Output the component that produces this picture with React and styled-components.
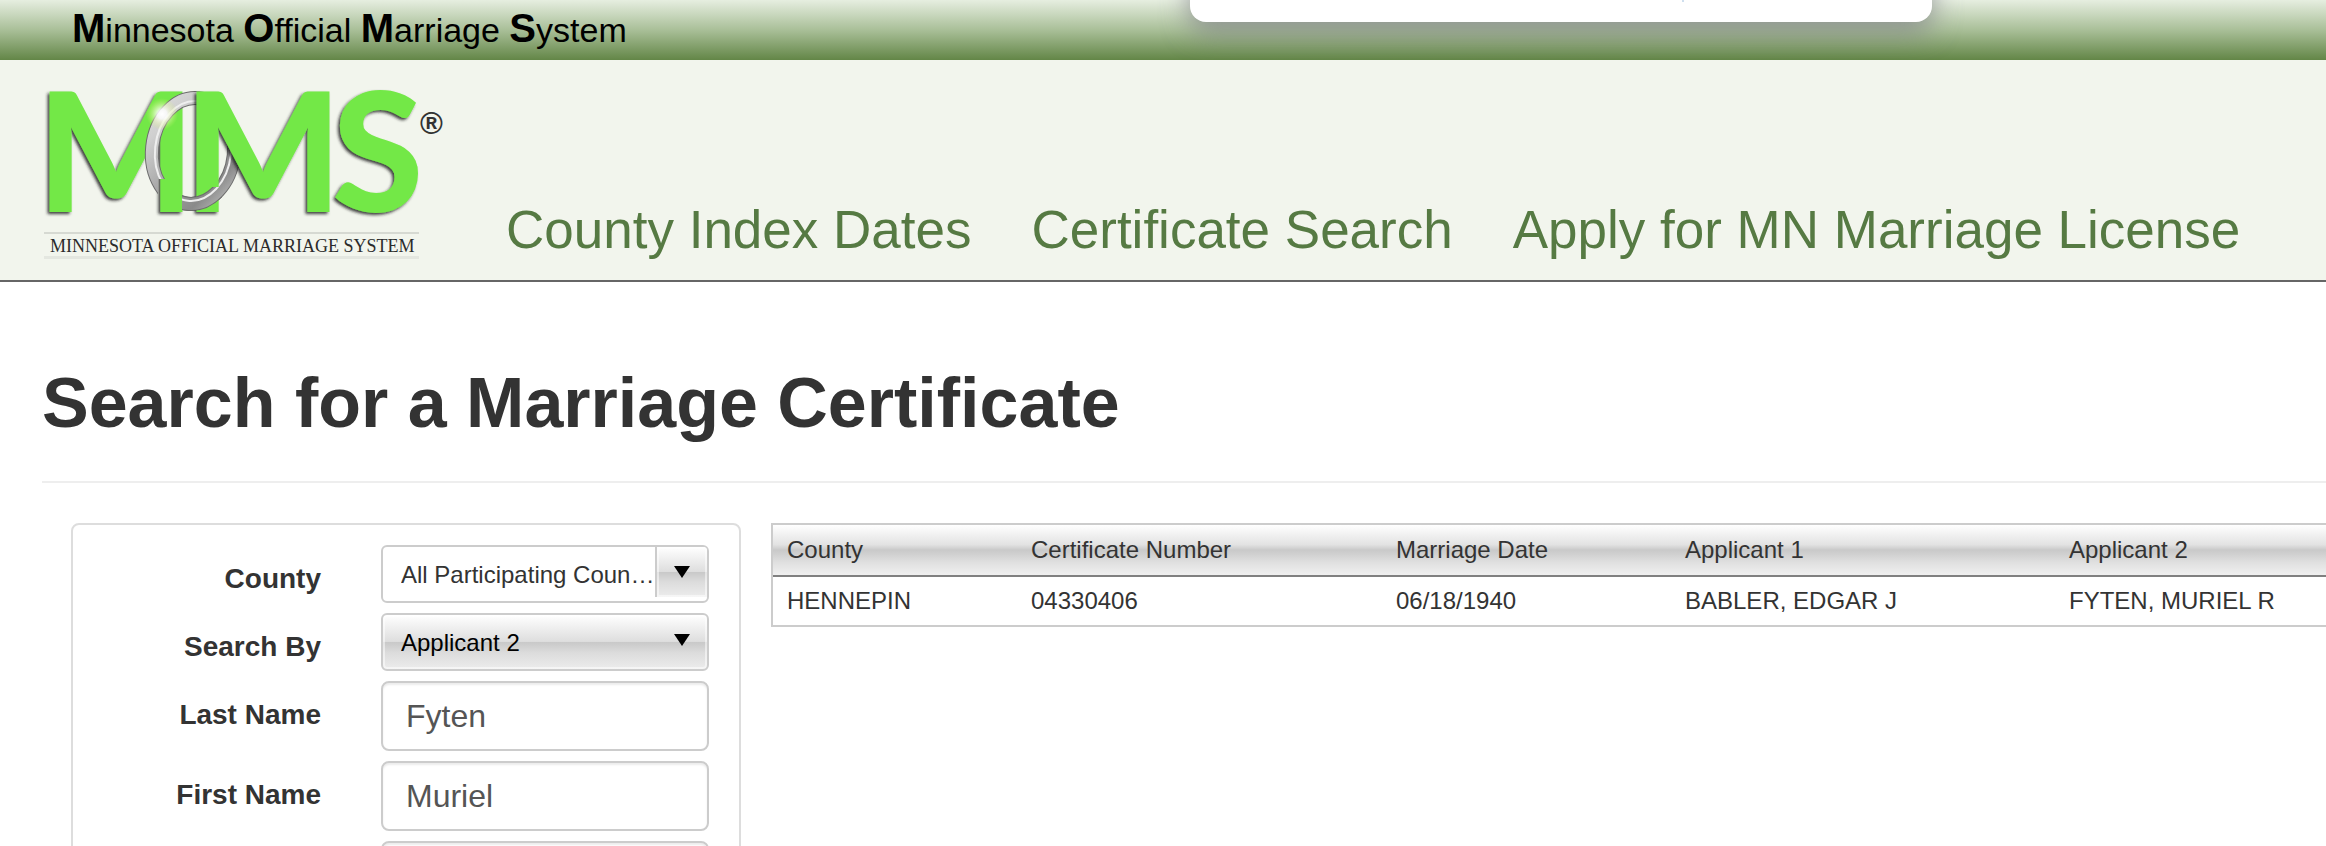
import React, { useState } from 'react';
import styled, { createGlobalStyle, css } from 'styled-components';

const colors = {
  green: '#567a43',
  headerBg: '#f2f5ed',
  text: '#333333',
  input: '#555555',
  border: '#cccccc',
  panel: '#dddddd',
  logo: '#73e847'
};

const glossy = css`
  background: linear-gradient(to bottom, #ffffff 0%, #dedede 49%, #c9c9c9 51%, #dcdcdc 70%, #ececec 100%);
  box-shadow: inset 0 0 0 2px rgba(255, 255, 255, 0.5);
`;

const GlobalStyle = createGlobalStyle`
  * {
    box-sizing: border-box;
  }

  body {
    margin: 0;
    background: #ffffff;
    color: ${colors.text};
    font-family: "Liberation Sans", Arial, sans-serif;
    font-size: 24px;
  }
`;

// Styled Components
const Page = styled.div`
  height: 100vh;
  overflow: hidden;
`;

const TopBar = styled.div`
  position: relative;
  height: 60px;
  padding-left: 72px;
  font-size: 34px;
  line-height: 56px;
  color: #000000;
  background: linear-gradient(to bottom, #e6eee0 0%, #a9bf98 50%, #638647 100%);
  overflow: hidden;
`;

const Initial = styled.b`
  font-size: 40px;
`;

// Bottom edge of the panel that hangs over the top bar
const Popover = styled.div`
  position: absolute;
  top: -40px;
  left: 1190px;
  width: 742px;
  height: 62px;
  border-radius: 16px;
  background: #ffffff;
  box-shadow: 0 10px 28px rgba(120, 120, 130, 0.7);

  &::after {
    content: '';
    position: absolute;
    left: 492px;
    bottom: 20px;
    width: 2px;
    height: 20px;
    background: #cfdfee;
  }
`;

const Header = styled.header`
  display: flex;
  align-items: flex-end;
  gap: 46px;
  height: 222px;
  padding: 0 30px 5px;
  background: ${colors.headerBg};
  border-bottom: 2px solid #666666;
`;

const Nav = styled.nav`
  display: flex;
  gap: 60px;
  padding-bottom: 14px;
`;

const NavLink = styled.a`
  font-size: 53px;
  line-height: 62px;
  color: ${colors.green};
  text-decoration: none;
  white-space: nowrap;
`;

const Main = styled.main`
  padding-left: 42px;
`;

const Title = styled.h1`
  margin: 0 0 40px;
  padding: 81px 0 38px;
  border-bottom: 2px solid #eeeeee;
  font-size: 70px;
  line-height: 80px;
  font-weight: bold;
`;

const Columns = styled.div`
  display: flex;
  align-items: flex-start;
  gap: 30px;
  padding-left: 29px;
`;

const Panel = styled.form`
  flex: none;
  width: 670px;
  padding: 20px 30px;
  border: 2px solid ${colors.panel};
  border-radius: 8px;
  display: flex;
  flex-direction: column;
  gap: 10px;
`;

const Field = styled.div`
  display: grid;
  grid-template-columns: 1fr 328px;
  column-gap: 60px;
  align-items: start;
`;

const Label = styled.label`
  padding-top: 14px;
  font-size: 28px;
  line-height: 40px;
  font-weight: bold;
  text-align: right;
`;

const SelectBox = styled.div`
  display: flex;
  align-items: flex-start;
  height: 58px;
  border: 2px solid ${colors.border};
  border-radius: 6px;
  overflow: hidden;
  ${({ $filled }) => $filled && glossy}
`;

const Select = styled.select`
  appearance: none;
  flex: 1;
  min-width: 0;
  height: 54px;
  padding: 0 0 0 18px;
  border: 0;
  outline: none;
  background: transparent;
  color: ${({ $filled }) => ($filled ? '#000000' : colors.text)};
  font: 24px "Liberation Sans", Arial, sans-serif;
  text-overflow: ellipsis;
`;

const Arrow = styled.span`
  width: 52px;
  height: 50px;
  padding: 19px 0 0 17px;
  border-left: 2px solid ${({ $filled }) => ($filled ? 'transparent' : colors.border)};
  ${({ $filled }) => !$filled && glossy}

  svg {
    display: block;
  }
`;

const Input = styled.input`
  width: 100%;
  height: 70px;
  padding: 0 23px;
  border: 2px solid ${colors.border};
  border-radius: 8px;
  outline: none;
  box-shadow: inset 0 2px 2px rgba(0, 0, 0, 0.08);
  color: ${colors.input};
  font: 32px "Liberation Sans", Arial, sans-serif;
`;

const Results = styled.div`
  flex: 1;
  min-width: 0;
  border: 2px solid ${colors.border};
  border-right: 0;
`;

const Table = styled.table`
  width: 100%;
  table-layout: fixed;
  border-collapse: separate;
  border-spacing: 0;
  text-align: left;
  white-space: nowrap;
`;

const Column = styled.col`
  width: ${({ $width }) => $width};
`;

const HeadRow = styled.tr`
  background: linear-gradient(to bottom, #ffffff 0%, #e2e2e2 38%, #c9c9c9 48%, #cfcfcf 55%, #e0e0e0 72%, #f2f2f2 100%);
`;

const HeadCell = styled.th`
  height: 52px;
  padding: 0 14px;
  border-bottom: 2px solid #808080;
  font-weight: normal;
`;

const Cell = styled.td`
  height: 48px;
  padding: 0 14px;
`;

const LogoLetter = styled.text`
  font-family: Lato, sans-serif;
  font-weight: 900;
  font-size: 166px;
  fill: ${colors.logo};
`;

const LogoCaption = styled.text`
  font-family: "Liberation Serif", serif;
  font-size: 18px;
  fill: #2b2b2b;
`;

const LogoMark = styled.text`
  font-family: "Liberation Sans", sans-serif;
  font-size: 31px;
  font-weight: bold;
  fill: #333333;
`;

const Ring = () => (
  <g transform="rotate(6 163 76)">
    <ellipse cx="163" cy="76" rx="41" ry="53" fill="none" stroke="#6d6d6d" strokeWidth="14" />
    <ellipse cx="163" cy="76" rx="41" ry="53" fill="none" stroke="url(#ring)" strokeWidth="12" />
    <ellipse cx="163" cy="76" rx="38" ry="50" fill="none" stroke="#eeeeee" strokeWidth="2" />
  </g>
);

const Logo = () => (
  <svg width="430" height="200" viewBox="0 0 430 200" role="img" aria-label="MOMS">
    <defs>
      <linearGradient id="ring" x1="0" y1="0" x2="1" y2="1">
        <stop offset="0" stopColor="#dddddd" />
        <stop offset="0.2" stopColor="#cfcfcf" />
        <stop offset="0.5" stopColor="#a8a8a8" />
        <stop offset="0.8" stopColor="#8a8a8a" />
        <stop offset="1" stopColor="#c4c4c4" />
      </linearGradient>
      <radialGradient id="shine">
        <stop offset="0" stopColor="#ffffff" />
        <stop offset="0.3" stopColor="#ffffff" stopOpacity="0.8" />
        <stop offset="1" stopColor="#d8f56a" stopOpacity="0" />
      </radialGradient>
      <filter id="drop" x="-10%" y="-10%" width="120%" height="120%">
        <feDropShadow dx="-2" dy="2" stdDeviation="1.5" floodColor="#222222" floodOpacity="0.85" />
      </filter>
      {/* the ring passes behind the right leg of the first letter */}
      <clipPath id="behind">
        <path d="M90 0H240V150H152V104H128V150H90Z" />
      </clipPath>
      <clipPath id="arc">
        <rect x="152" y="112" width="40" height="40" />
      </clipPath>
    </defs>
    <LogoLetter x="7" y="137" filter="url(#drop)">M</LogoLetter>
    <g clipPath="url(#behind)">
      <Ring />
    </g>
    <LogoLetter x="154" y="137" filter="url(#drop)">M</LogoLetter>
    <g clipPath="url(#arc)">
      <Ring />
    </g>
    <circle cx="132" cy="39" r="16" fill="url(#shine)" />
    <LogoLetter x="302" y="137" filter="url(#drop)">S</LogoLetter>
    <LogoMark x="390" y="59">®</LogoMark>
    <rect x="14" y="157" width="375" height="2" fill="#d6d9d2" />
    <LogoCaption x="20" y="177">MINNESOTA OFFICIAL MARRIAGE SYSTEM</LogoCaption>
    <rect x="14" y="181" width="375" height="3" fill="#e4e7e0" />
  </svg>
);

const navItems = ['County Index Dates', 'Certificate Search', 'Apply for MN Marriage License'];

const columns = [
  { key: 'county', title: 'County', width: '244px' },
  { key: 'number', title: 'Certificate Number', width: '365px' },
  { key: 'date', title: 'Marriage Date', width: '289px' },
  { key: 'applicant1', title: 'Applicant 1', width: '384px' },
  { key: 'applicant2', title: 'Applicant 2', width: 'auto' }
];

const records = [
  {
    county: 'HENNEPIN',
    number: '04330406',
    date: '06/18/1940',
    applicant1: 'BABLER, EDGAR J',
    applicant2: 'FYTEN, MURIEL R'
  }
];

const SelectField = ({ id, label, filled, options, value, onChange }) => (
  <Field>
    <Label htmlFor={id}>{label}</Label>
    <SelectBox $filled={filled}>
      <Select id={id} name={id} $filled={filled} value={value} onChange={onChange}>
        {options.map(option => <option key={option}>{option}</option>)}
      </Select>
      <Arrow $filled={filled}>
        <svg width="16" height="12" viewBox="0 0 16 12" aria-hidden="true">
          <path d="M0 0H16L8 12Z" fill="#000000" />
        </svg>
      </Arrow>
    </SelectBox>
  </Field>
);

const TextField = ({ id, label, value, onChange }) => (
  <Field>
    <Label htmlFor={id}>{label}</Label>
    <Input type="text" id={id} name={id} value={value} onChange={onChange} />
  </Field>
);

// Main Component
const App = () => {
  const [formData, setFormData] = useState({
    county: 'All Participating Counties',
    searchBy: 'Applicant 2',
    lastName: 'Fyten',
    firstName: 'Muriel',
    middleName: ''
  });

  const handleChange = (e) => {
    const { name, value } = e.target;
    setFormData(prev => ({ ...prev, [name]: value }));
  };

  return (
    <>
      <GlobalStyle />
      <Page>
        <TopBar>
          <Initial>M</Initial>innesota <Initial>O</Initial>fficial <Initial>M</Initial>arriage <Initial>S</Initial>ystem
          <Popover />
        </TopBar>

        <Header>
          <Logo />
          <Nav>
            {navItems.map(item => <NavLink key={item} href="#">{item}</NavLink>)}
          </Nav>
        </Header>

        <Main>
          <Title>Search for a Marriage Certificate</Title>

          <Columns>
            <Panel>
              <SelectField
                id="county"
                label="County"
                options={['All Participating Counties', 'Hennepin']}
                value={formData.county}
                onChange={handleChange}
              />
              <SelectField
                id="searchBy"
                label="Search By"
                filled
                options={['Applicant 1', 'Applicant 2']}
                value={formData.searchBy}
                onChange={handleChange}
              />
              <TextField id="lastName" label="Last Name" value={formData.lastName} onChange={handleChange} />
              <TextField id="firstName" label="First Name" value={formData.firstName} onChange={handleChange} />
              <TextField id="middleName" label="Middle Name" value={formData.middleName} onChange={handleChange} />
            </Panel>

            <Results>
              <Table>
                <colgroup>
                  {columns.map(col => <Column key={col.key} $width={col.width} />)}
                </colgroup>
                <thead>
                  <HeadRow>
                    {columns.map(col => <HeadCell key={col.key} scope="col">{col.title}</HeadCell>)}
                  </HeadRow>
                </thead>
                <tbody>
                  {records.map(record => (
                    <tr key={record.number}>
                      {columns.map(col => <Cell key={col.key}>{record[col.key]}</Cell>)}
                    </tr>
                  ))}
                </tbody>
              </Table>
            </Results>
          </Columns>
        </Main>
      </Page>
    </>
  );
};

export default App;
